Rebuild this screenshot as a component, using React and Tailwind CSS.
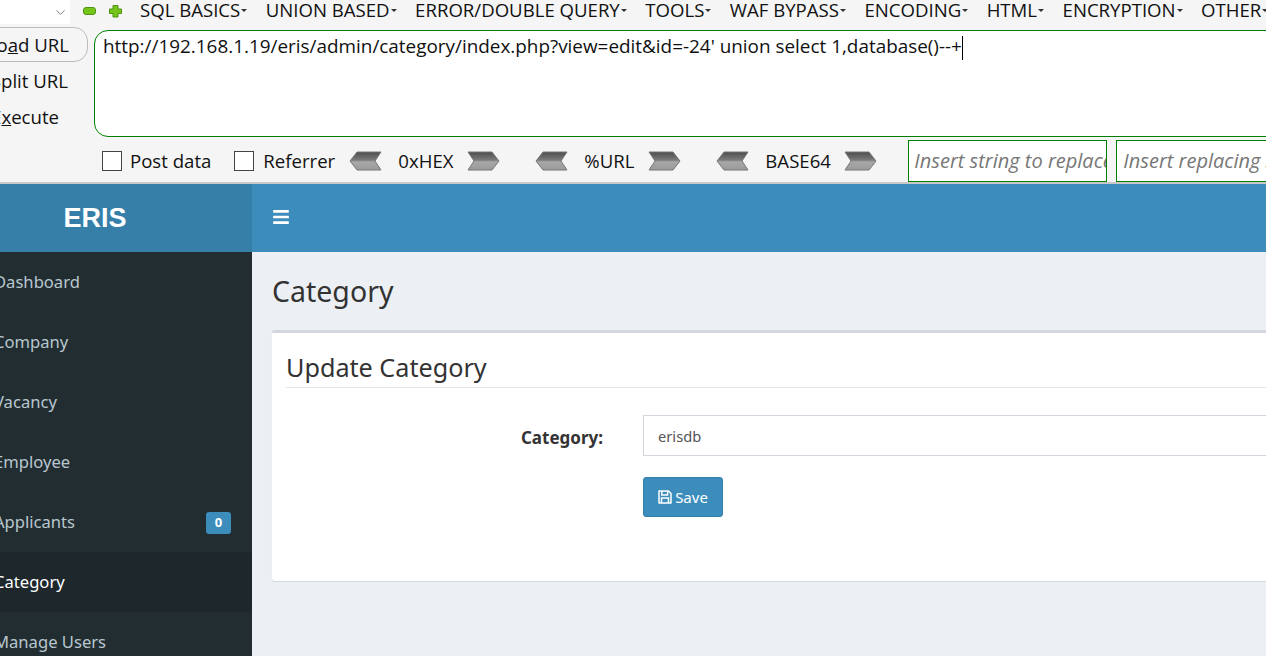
import { ChevronDown } from 'lucide-react'
import { FaBars } from 'react-icons/fa'

const MENU = ['SQL BASICS', 'UNION BASED', 'ERROR/DOUBLE QUERY', 'TOOLS', 'WAF BYPASS', 'ENCODING', 'HTML', 'ENCRYPTION', 'OTHER']
const NAV = ['Dashboard', 'Company', 'Vacancy', 'Employee', 'Applicants', 'Category', 'Manage Users']
const BASE = [['0xHEX', 'w-[55px]', 'mr-[35px]'], ['%URL', 'w-[50px]', 'mr-[35px]'], ['BASE64', 'w-[65px]', 'mr-[31px]']]

function Arrow({ flip }) {
  return (
    <svg width="34" height="20" viewBox="0 0 34 20" className={`shrink-0 ${flip ? '-scale-x-100' : ''}`}>
      <defs>
        <linearGradient id="arrowFill" x1="0" y1="0" x2="0" y2="1">
          <stop offset="0" stopColor="#4d4d4d" />
          <stop offset="0.45" stopColor="#7a7a7a" />
          <stop offset="0.55" stopColor="#a8a8a8" />
          <stop offset="1" stopColor="#9a9a9a" />
        </linearGradient>
      </defs>
      <path d="M8 1H32L26 10L32 19H8L1 10Z" fill="url(#arrowFill)" stroke="#777" strokeWidth="1" />
    </svg>
  )
}

function SaveIcon() {
  return (
    <svg width="14" height="14" viewBox="0 0 14 14" fill="none" stroke="currentColor" strokeWidth="1.5" className="shrink-0">
      <path d="M1 1H10.5L13 3.5V13H1Z" strokeLinejoin="round" />
      <path d="M3.8 1V5H9.6V1" />
      <path d="M3.5 13V8H10.5V13" />
    </svg>
  )
}

function Toolbar() {
  return (
    <div className="h-[184px] shrink-0 bg-[#f5f5f5] border-b-2 border-[#c8c8c8] font-['Open_Sans','Noto_Sans',sans-serif] text-[#111]">
      <div className="h-[27px] flex items-start">
        <div className="w-[70px] h-[24px] shrink-0 bg-white flex justify-end items-center pr-[2px]">
          <ChevronDown size={15} strokeWidth={1.2} className="text-[#555]" />
        </div>
        <svg width="50" height="20" viewBox="0 0 50 20" className="ml-[10px] mt-[1px] shrink-0">
          <rect x="3.5" y="6.5" width="12" height="7" rx="2.5" fill="#74c41c" stroke="#4e9410" />
          <path d="M33 4.5h5v3.5h3.5v4.5H38V16h-5v-3.5h-3.5V8H33Z" fill="#74c41c" stroke="#4e9410" strokeLinejoin="round" />
        </svg>
        <div className="ml-[10px] flex gap-[18.5px] text-[18.6px] leading-[20px] whitespace-nowrap">
          {MENU.map(m => (
            <span key={m} className="flex items-center">
              {m}
              <span className="ml-[1px] w-0 h-0 border-x-[3.5px] border-x-transparent border-t-[3px] border-t-[#333]" />
            </span>
          ))}
        </div>
      </div>

      <div className="h-[110px] flex text-[18.6px]">
        <div className="w-[88px] shrink-0 overflow-hidden">
          <div className="-ml-[20px] h-[35px] border border-[#bbb] rounded-[14px] flex items-center justify-end pr-[18px] whitespace-nowrap">
            <span>Lo<u>a</u>d URL</span>
          </div>
          <div className="h-[38px] flex items-center justify-end pr-[20px] whitespace-nowrap">Split URL</div>
          <div className="h-[34px] flex items-center justify-end pr-[29px] whitespace-nowrap">
            <span>E<u>x</u>ecute</span>
          </div>
        </div>
        <div className="ml-[6px] mt-[3px] flex-1 mr-[-20px] border border-[#008000] rounded-l-[14px] bg-white pl-[8px] pt-[1px] text-[18.9px] leading-[28px] whitespace-nowrap">
          http://192.168.1.19/eris/admin/category/index.php?view=edit&id=-24' union select 1,database()--+<span className="inline-block w-px h-[24px] bg-black align-middle" />
        </div>
      </div>

      <div className="h-[45px] pt-[3px] flex items-center pl-[102px] text-[18.6px] whitespace-nowrap">
        <span className="w-[20px] h-[20px] shrink-0 border border-[#444] bg-white" />
        <span className="ml-[8px]">Post data</span>
        <span className="ml-[23px] w-[20px] h-[20px] shrink-0 border border-[#444] bg-white" />
        <span className="ml-[9px] w-[69px]">Referrer</span>
        <div className="ml-[17px] flex items-center">
          {BASE.map(([label, w, gap]) => (
            <div key={label} className={`flex items-center ${gap}`}>
              <Arrow />
              <span className={`${w} ml-[15px] mr-[13px] text-center`}>{label}</span>
              <Arrow flip />
            </div>
          ))}
        </div>
        <div className="w-[199px] h-[42px] shrink-0 border border-[#008000] bg-white pl-[5px] leading-[40px] italic text-[20px] text-[#777] overflow-hidden">Insert string to replace</div>
        <div className="ml-[9px] w-[260px] h-[42px] shrink-0 border border-[#008000] bg-white pl-[6px] leading-[40px] italic text-[20px] text-[#777] overflow-hidden">Insert replacing string</div>
      </div>
    </div>
  )
}

function Sidebar() {
  return (
    <div className="w-[252px] shrink-0 flex flex-col">
      <div className="h-[68px] bg-[#367fa9] text-white flex items-center justify-center pr-[62px] font-['Liberation_Sans',sans-serif] font-bold text-[27px]">
        ERIS
      </div>
      <div className="flex-1 bg-[#222d32] overflow-hidden">
        {NAV.map(item => {
          const active = item === 'Category'
          return (
            <div key={item} className={`h-[60px] flex items-center -ml-[6px] pr-[21px] text-[16.6px] ${active ? 'bg-[#1e282c] text-white' : 'text-[#b8c7ce]'}`}>
              <span className="flex-1">{item}</span>
              {item === 'Applicants' && (
                <span className="mt-[2px] w-[25px] h-[22px] rounded-[3px] bg-[#3c8dbc] text-white text-[13px] font-bold flex items-center justify-center">0</span>
              )}
            </div>
          )
        })}
      </div>
    </div>
  )
}

export default function App() {
  return (
    <div className="w-[1266px] h-[656px] overflow-hidden flex flex-col bg-[#ecf0f5] font-['Noto_Sans',sans-serif]">
      <Toolbar />
      <div className="flex-1 flex min-h-0">
        <Sidebar />
        <div className="flex-1 flex flex-col min-w-0">
          <div className="h-[68px] bg-[#3c8dbc] flex items-center pl-[20px] pb-[2px] text-white">
            <FaBars size={18} />
          </div>
          <div className="pl-[20px] pt-[18px]">
            <h1 className="text-[28.5px] leading-[42px] text-[#333]">Category</h1>
            <div className="mt-[18px] w-[1100px] h-[251px] bg-white border-t-[3px] border-[#d2d6de] rounded-[3px] shadow-[0_1px_1px_rgba(0,0,0,0.1)] px-[14px] pt-[12px]">
              <h2 className="h-[43px] text-[25.2px] leading-[44px] text-[#333] border-b border-[#e5e5e5]">Update Category</h2>
              <div className="mt-[27px] flex items-center">
                <label className="w-[317px] pt-[4px] text-right text-[17px] font-bold text-[#333]">Category:</label>
                <div className="ml-[40px] flex-1 h-[41px] border border-[#d2d6de] pl-[14px] pt-[2px] flex items-center text-[14.7px] text-[#555]">erisdb</div>
              </div>
              <button className="mt-[21px] ml-[357px] w-[80px] h-[40px] bg-[#3c8dbc] border border-[#367fa9] rounded-[3px] text-white text-[15px] flex items-center justify-center gap-[3px]">
                <SaveIcon />
                Save
              </button>
            </div>
          </div>
        </div>
      </div>
    </div>
  )
}
